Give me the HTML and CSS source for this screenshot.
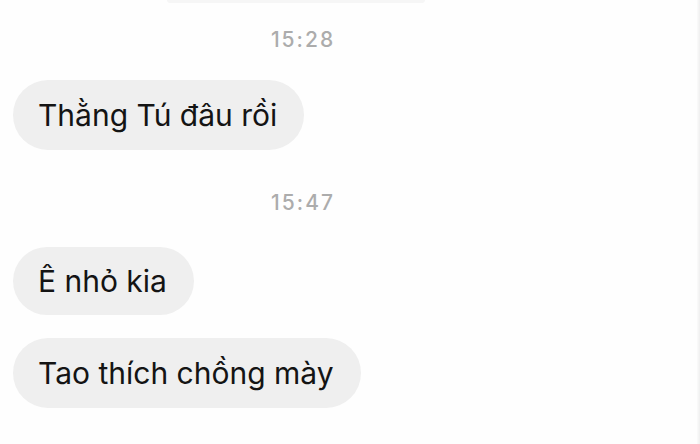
FILE: index.html
```html
<!DOCTYPE html>
<html lang="vi">
<head>
<meta charset="utf-8">
<link rel="stylesheet" href="styles.css">
</head>
<body>
<div class="screen">
  <div class="chat">
    <div class="prev-bubble"></div>
    <div class="time t1">15:28</div>
    <div class="msg m1"><span>Thằng Tú đâu rồi</span></div>
    <div class="time t2">15:47</div>
    <div class="msg m2"><span>Ê nhỏ kia</span></div>
    <div class="msg m3"><span>Tao thích chồng mày</span></div>
  </div>
  <div class="edge"></div>
</div>
</body>
</html>
```
FILE: styles.css
```css
html, body {
  margin: 0;
  padding: 0;
  background: #fefefe;
}
.screen {
  display: flex;
  width: 700px;
  height: 444px;
  overflow: hidden;
  font-family: Inter, "Noto Sans", sans-serif;
}
.chat {
  width: 604px;
  flex: none;
  display: flex;
  flex-direction: column;
  align-items: flex-start;
}
.edge {
  margin-left: auto;
  width: 3px;
  background: linear-gradient(to right, #fbfbfb, #efefef);
}
.prev-bubble {
  align-self: center;
  width: 258px;
  height: 3px;
  margin-right: 12px;
  border-radius: 0 0 10px 10px;
  background: #f6f6f6;
}
.time {
  align-self: center;
  font-size: 21px;
  font-weight: 500;
  line-height: 26px;
  letter-spacing: 2px;
  color: #acacac;
  margin-left: 2px;
}
.t1 { margin-top: 24px; }
.t2 { margin-top: 40px; }
.msg {
  margin-left: 13px;
  background: #efefef;
  border-radius: 35px;
  height: 70px;
  display: flex;
  align-items: center;
  padding: 0 27px 0 25px;
  font-size: 30px;
  color: #141414;
}
.m1 { margin-top: 27px; }
.m2 { margin-top: 31px; height: 68px; }
.m3 { margin-top: 23px; }
```
